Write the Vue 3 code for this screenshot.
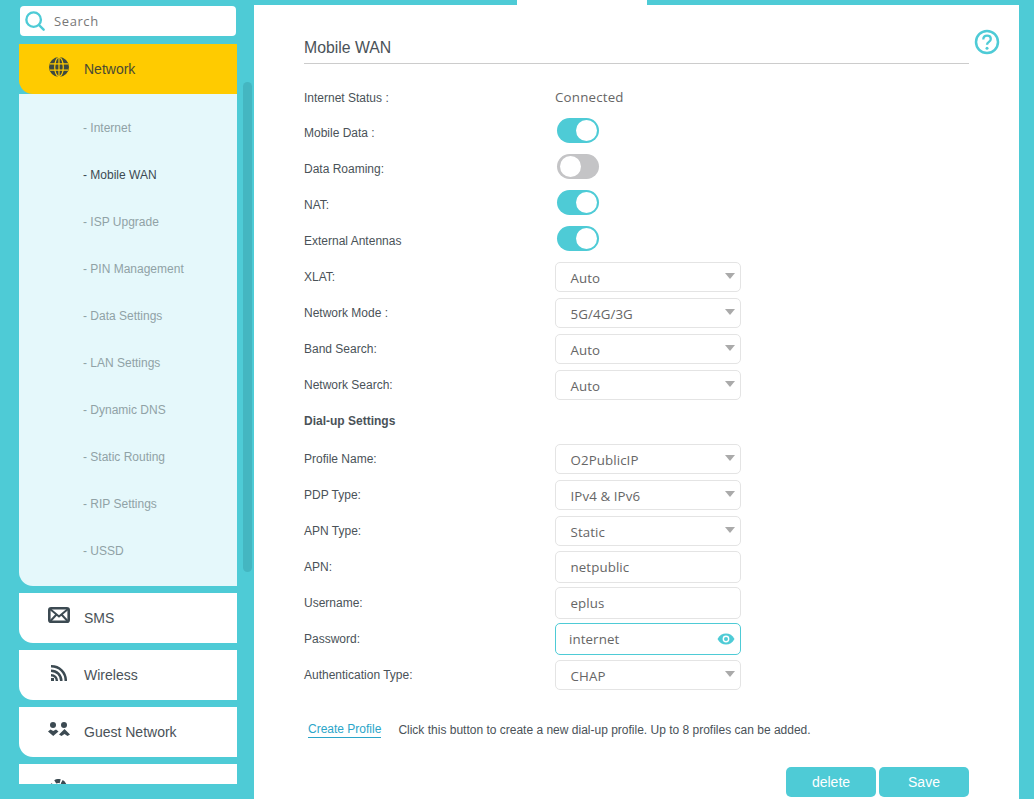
<script setup>
import { ref } from 'vue'

const search = ref('')
const subItems = ['Internet', 'Mobile WAN', 'ISP Upgrade', 'PIN Management', 'Data Settings', 'LAN Settings', 'Dynamic DNS', 'Static Routing', 'RIP Settings', 'USSD']
const toggles = ref([
  { label: 'Mobile Data :', on: true },
  { label: 'Data Roaming:', on: false },
  { label: 'NAT:', on: true },
  { label: 'External Antennas', on: true },
])
const radioSelects = [
  { label: 'XLAT:', value: 'Auto' },
  { label: 'Network Mode :', value: '5G/4G/3G' },
  { label: 'Band Search:', value: 'Auto' },
  { label: 'Network Search:', value: 'Auto' },
]
const dialSelects = [
  { label: 'Profile Name:', value: 'O2PublicIP' },
  { label: 'PDP Type:', value: 'IPv4 & IPv6' },
  { label: 'APN Type:', value: 'Static' },
]
const dialInputs = [
  { label: 'APN:', value: 'netpublic' },
  { label: 'Username:', value: 'eplus' },
]
</script>

<template>
  <div class="page">
    <aside class="side">
      <div class="search">
        <svg class="search-icon" width="20" height="20" viewBox="0 0 22 22" fill="none" stroke="#4ecbd6" stroke-width="2.6">
          <circle cx="9.500" cy="9.500" r="8" />
          <path d="M15.500 15.500l5 5" stroke-linecap="round" />
        </svg>
        <input v-model="search" class="search-input" placeholder="Search" />
      </div>

      <div class="nav-item active">
        <svg class="nav-icon globe" width="20" height="20" viewBox="0 0 20 20">
          <circle cx="10" cy="10" r="10" fill="#3d4a40" />
          <g fill="none" stroke="#ffcb00" stroke-width="1.200">
            <ellipse cx="10" cy="10" rx="4.300" ry="9.500" />
            <path d="M1 6.800h18M1 13.200h18M10 0.500v19" />
          </g>
        </svg>
        <span>Network</span>
      </div>
      <ul class="sub">
        <li v-for="item in subItems" :key="item" :class="{ current: item === 'Mobile WAN' }">- {{ item }}</li>
      </ul>

      <div class="nav-item">
        <svg class="nav-icon mail" width="22" height="16" viewBox="0 0 22 16" fill="none" stroke="#3c4a52" stroke-width="2.600">
          <rect x="1.300" y="1.300" width="19.400" height="13.400" rx="1.800" />
          <path d="M2 2l9 7.500L20 2M2.500 14l6-6.500M19.500 14l-6-6.500" stroke-width="2" />
        </svg>
        <span>SMS</span>
      </div>
      <div class="nav-item">
        <svg class="nav-icon wifi" width="16" height="16" viewBox="0 0 16 16" fill="none" stroke="#3c4a52" stroke-width="2.500">
          <path d="M0 1.300C8.500 1.200 14.800 7.500 14.800 16M0 5.800C5.800 5.800 10.300 10.200 10.300 16M0 10.200C3.500 10.200 5.900 12.500 5.900 16" />
          <rect x="0" y="13" width="3" height="3" fill="#3c4a52" stroke="none" />
        </svg>
        <span>Wireless</span>
      </div>
      <div class="nav-item">
        <svg class="nav-icon guest" width="22" height="14" viewBox="0 0 22 14" fill="#3c4a52">
          <circle cx="5" cy="3" r="3" />
          <circle cx="16" cy="3" r="3" />
          <path d="M0 9.500L2.500 7.500L5.200 9L8 7.500L10.500 9.500L5.200 14z" />
          <path d="M11 12.500L16.500 7L22 12.500L19.500 14L16.500 12L13.500 14z" />
        </svg>
        <span>Guest Network</span>
      </div>
      <div class="nav-item">
        <svg class="nav-icon chart" width="17" height="17" viewBox="0 0 17 17" fill="none" stroke="#3c4a52" stroke-width="4">
          <circle cx="8.500" cy="8.500" r="6.500" stroke-dasharray="5 1.500 30 4" transform="rotate(-120 8.500 8.500)" />
        </svg>
      </div>
      <div class="scrollbar"></div>
    </aside>

    <main class="panel">
      <div class="tab-notch"></div>
      <svg class="help" width="26" height="26" viewBox="0 0 26 26" fill="none" stroke="#4ecbd6" stroke-width="2.500">
        <circle cx="13" cy="13" r="11" />
        <path d="M9.300 10.500c0-2.400 1.700-3.800 3.800-3.800s3.700 1.300 3.700 3.300c0 2.900-3.800 2.800-3.800 5.700" stroke-width="2.300" />
        <circle cx="13" cy="19.200" r="1.500" fill="#4ecbd6" stroke="none" />
      </svg>

      <h1 class="title">Mobile WAN</h1>

      <form class="form" @submit.prevent>
        <div class="row first">
          <label>Internet Status :</label>
          <span class="status">Connected</span>
        </div>
        <div v-for="t in toggles" :key="t.label" class="row">
          <label>{{ t.label }}</label>
          <button type="button" class="toggle" :class="{ on: t.on }" @click="t.on = !t.on"><i></i></button>
        </div>
        <div v-for="s in radioSelects" :key="s.label" class="row">
          <label>{{ s.label }}</label>
          <div class="control select">{{ s.value }}<i class="arrow"></i></div>
        </div>
        <div class="row"><b class="section">Dial-up Settings</b></div>
        <div class="row-gap"></div>
        <div v-for="s in dialSelects" :key="s.label" class="row">
          <label>{{ s.label }}</label>
          <div class="control select">{{ s.value }}<i class="arrow"></i></div>
        </div>
        <div v-for="s in dialInputs" :key="s.label" class="row">
          <label>{{ s.label }}</label>
          <div class="control text">{{ s.value }}</div>
        </div>
        <div class="row">
          <label>Password:</label>
          <div class="control text focus">
            internet
            <svg class="eye" width="18" height="12" viewBox="0 0 18 12">
              <path d="M0.500 6C2.500 2.300 5.500 0.500 9 0.500S15.500 2.300 17.500 6C15.500 9.700 12.500 11.500 9 11.500S2.500 9.700 0.500 6z" fill="#4ecbd6" />
              <circle cx="9" cy="6" r="3.400" fill="#fff" />
              <circle cx="9" cy="6" r="2" fill="#4ecbd6" />
            </svg>
          </div>
        </div>
        <div class="row">
          <label>Authentication Type:</label>
          <div class="control select">CHAP<i class="arrow"></i></div>
        </div>
      </form>

      <div class="profile">
        <a class="create">Create Profile</a>
        <span>Click this button to create a new dial-up profile. Up to 8 profiles can be added.</span>
      </div>

      <div class="actions">
        <button type="button" class="btn">delete</button>
        <button type="button" class="btn">Save</button>
      </div>
    </main>
  </div>
</template>

<style>
html, body {
  margin: 0;
  overflow: hidden;
}
</style>

<style scoped>
.page {
  width: 1034px;
  height: 799px;
  display: flex;
  overflow: hidden;
  background: #4ecbd6;
  font-family: "Liberation Sans", Arial, sans-serif;
}

.side {
  position: relative;
  width: 254px;
  height: 784px;
  flex: none;
  overflow: hidden;
  padding: 6px 0 0 19px;
  box-sizing: border-box;
}

.search {
  width: 216px;
  height: 30px;
  margin: 0 0 8px 1px;
  display: flex;
  align-items: center;
  background: #fff;
  border-radius: 4px;
}
.search-icon {
  margin-left: 5px;
  flex: none;
}
.search-input {
  width: 150px;
  margin-left: 9px;
  padding: 0;
  border: 0;
  outline: 0;
  background: none;
  font: 13px "Open Sans", sans-serif;
  letter-spacing: 0.6px;
  color: #666;
}
.search-input::placeholder {
  color: #777;
  opacity: 1;
}

.nav-item {
  position: relative;
  width: 218px;
  height: 50px;
  margin-bottom: 7px;
  display: flex;
  align-items: center;
  padding-left: 65px;
  box-sizing: border-box;
  background: #fff;
  border-bottom-left-radius: 14px;
  font-size: 14px;
  color: #4a5258;
}
.nav-item.active {
  margin-bottom: 0;
  background: #ffcb00;
  color: #4a4a32;
}
.nav-icon {
  position: absolute;
  left: 29px;
  top: 14px;
}
.nav-icon.globe {
  left: 30px;
  top: 13px;
}
.nav-icon.wifi {
  left: 32px;
  top: 15px;
}
.nav-icon.guest {
  top: 15px;
}
.nav-icon.chart {
  left: 31px;
  top: 15px;
}

.sub {
  width: 218px;
  height: 492px;
  margin: 0 0 7px;
  padding: 11px 0 0 64px;
  box-sizing: border-box;
  list-style: none;
  background: #e5f8fb;
  border-bottom-left-radius: 14px;
}
.sub li {
  height: 47px;
  line-height: 47px;
  font-size: 12px;
  color: #90a2a6;
}
.sub li.current {
  color: #3c4a52;
}

.scrollbar {
  position: absolute;
  left: 243px;
  top: 82px;
  width: 9px;
  height: 490px;
  border-radius: 5px;
  background: #44b6c1;
}

.panel {
  position: relative;
  width: 765px;
  height: 794px;
  margin-top: 5px;
  padding: 0 50px;
  box-sizing: border-box;
  background: #fff;
}
.tab-notch {
  position: absolute;
  left: 263px;
  top: -5px;
  width: 130px;
  height: 5px;
  background: #fff;
}
.help {
  position: absolute;
  left: 720px;
  top: 24px;
}

.title {
  height: 59px;
  margin: 0 0 16px;
  box-sizing: border-box;
  border-bottom: 1px solid #ccc;
  font: 400 15.800px/86px "Liberation Sans", Arial, sans-serif;
  color: #4a5258;
}

.form {
  display: flex;
  flex-direction: column;
}
.row {
  height: 36px;
  display: flex;
  align-items: center;
  font-size: 12px;
  color: #4a5258;
}
.row.first {
  height: 35px;
}
.row label {
  width: 251px;
  flex: none;
}
.row-gap {
  height: 2px;
}
.section {
  font-weight: 700;
}
.status {
  margin-bottom: 1px;
  font: 13.300px "Open Sans", sans-serif;
  letter-spacing: 0.2px;
  color: #666;
}

.toggle {
  width: 42px;
  height: 25px;
  margin: 0 0 5px 2px;
  padding: 0;
  display: flex;
  align-items: center;
  border: 0;
  border-radius: 13px;
  background: #c4c4c6;
}
.toggle i {
  width: 21px;
  height: 21px;
  margin-left: 3px;
  border-radius: 50%;
  background: #fff;
}
.toggle.on {
  justify-content: flex-end;
  background: #4ecbd6;
}
.toggle.on i {
  margin: 0 2px 0 0;
}

.control {
  position: relative;
  width: 186px;
  height: 30px;
  display: flex;
  align-items: center;
  padding: 1px 0 0 14.500px;
  box-sizing: border-box;
  border: 1px solid #e4e4e4;
  border-radius: 5px;
  font: 13.300px "Open Sans", sans-serif;
  letter-spacing: 0.1px;
  color: #666;
}
.control.text {
  height: 32px;
  margin-bottom: 1px;
}
.control.focus {
  padding-left: 13px;
  border-color: #4ecbd6;
}
.arrow {
  position: absolute;
  right: 5px;
  top: 10px;
  border-style: solid;
  border-width: 6px 5.500px 0;
  border-color: #aaa transparent transparent;
}
.eye {
  position: absolute;
  right: 5px;
  top: 9px;
}

.profile {
  margin: 29px 0 0 4px;
  display: flex;
  align-items: center;
  font-size: 12px;
  color: #4a5258;
}
.create {
  margin-right: 17px;
  padding-bottom: 1px;
  border-bottom: 1px solid #2ba5c9;
  color: #2ba5c9;
}

.actions {
  margin-top: 29px;
  display: flex;
  justify-content: flex-end;
  gap: 3px;
}
.btn {
  width: 90px;
  height: 30px;
  padding: 0;
  border: 0;
  border-radius: 5px;
  background: #4ecbd6;
  color: #fff;
  font: 14px "Liberation Sans", Arial, sans-serif;
}
</style>
